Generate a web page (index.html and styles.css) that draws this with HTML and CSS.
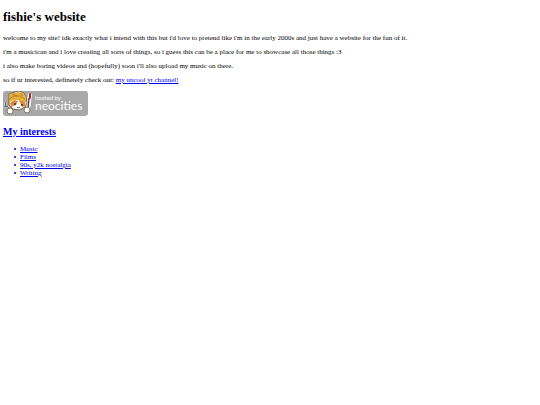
FILE: index.html
```html
<!DOCTYPE html>
<html lang="en">
<head>
    <meta charset="UTF-8">
    <meta name="viewport" content="width=device-width, initial-scale=1.0">
    <title>fishie's website</title>
    <link rel="stylesheet" href="styles.css">
</head>
<body>
    <h1>fishie's website</h1>
    <p>welcome to my site! idk exactly what i intend with this but i'd love to pretend like i'm in the early 2000s and just have a website for the fun of it.</p>
    <p>i'm a musicican and i love creating all sorts of things, so i guess this can be a place for me to showcase all those things :3</p>
    <p>i also make boring videos and (hopefully) soon i'll also upload my music on there.</p>
    <p>so if ur interested, definetely check out: <a href="#">my uncool yt channel!</a></p>

    <a class="badge" href="#" aria-label="hosted by neocities">
        <svg width="85" height="25" viewBox="0 0 85 25">
            <rect width="85" height="25" rx="3" fill="#a8a8a8"/>
            <!-- fork -->
            <path d="M2 11l1 4 2 1 3 5M1 15l3 1M5 11v4" fill="none" stroke="#eee" stroke-width="2"/>
            <path d="M2 11l1 4 2 1 3 5M1 15l3 1M5 11v4" fill="none" stroke="#555" stroke-width="1"/>
            <!-- brush -->
            <path d="M25 18l2-15" stroke="#fff" stroke-width="4"/>
            <path d="M25 18l1-11" stroke="#5b3a34" stroke-width="1.4"/>
            <path d="M26 8l0-5 2-1 0 4-1 3z" fill="#9c2a24"/>
            <!-- cat -->
            <path d="M6 8l0-5 3-1 3-1 4-1 5 2 2 4 1 6-2 4-6 3-6-1-4-4z" fill="#fff" stroke="#5c4426" stroke-width=".8"/>
            <path d="M6 11l0-7 3-2 3 0 3-1 5 1 3 4 0 5-3 0-5-2-5 0-4 3z" fill="#e6b03a"/>
            <path d="M6 8l5-3 6 0 5 3M9 3l5 2M17 2l3 3" fill="none" stroke="#94702a" stroke-width=".7"/>
            <path d="M7 12l4-3 4 1-2 4-5 2zM16 9l6 2 1 4-4 1z" fill="#db8a40"/>
            <circle cx="12" cy="13" r="1" fill="#333"/>
            <circle cx="19" cy="14" r="1" fill="#333"/>
            <path d="M14 16l1 1 2-1" fill="none" stroke="#633" stroke-width=".8"/>
            <!-- hands -->
            <circle cx="7" cy="20" r="3" fill="#fff" stroke="#665a40" stroke-width=".8"/>
            <circle cx="24" cy="19" r="3" fill="#fff" stroke="#665a40" stroke-width=".8"/>
            <text class="badge-small" x="32" y="9">hosted by</text>
            <text class="badge-name" x="32" y="19">neocities</text>
        </svg>
    </a>

    <h2><a href="#">My interests</a></h2>
    <ul>
        <li><a href="#">Music</a></li>
        <li><a href="#">Films</a></li>
        <li><a href="#">90s, y2k nostalgia</a></li>
        <li><a href="#">Writing</a></li>
    </ul>
</body>
</html>
```
FILE: styles.css
```css
body {
    margin: 9px 3px;
    font-family: 'Liberation Serif', serif;
    font-size: 7px;
    line-height: 8px;
    color: #000;
    background-color: #fff;
}
h1 {
    margin: 0 0 9px;
    font-size: 13px;
    line-height: 16px;
}
p {
    margin: 0 0 6px;
}
p:last-of-type {
    margin-bottom: 7px;
}
a {
    color: #0000ee;
}
.badge {
    display: block;
    width: 85px;
}
.badge svg {
    display: block;
}
.badge text {
    font-family: 'Lato', sans-serif;
    fill: #fff;
}
.badge-small {
    font-size: 6px;
}
.badge-name {
    font-size: 12px;
}
h2 {
    margin: 10px 0 7px;
    font-size: 10px;
    line-height: 12px;
}
ul {
    margin: 0;
    padding-left: 11px;
    list-style: none;
    color: #0000ee;
}
li {
    display: flex;
    align-items: center;
    gap: 4px;
}
li::before {
    content: '';
    width: 2px;
    height: 2px;
    border-radius: 50%;
    background-color: #0000ee;
}
```
